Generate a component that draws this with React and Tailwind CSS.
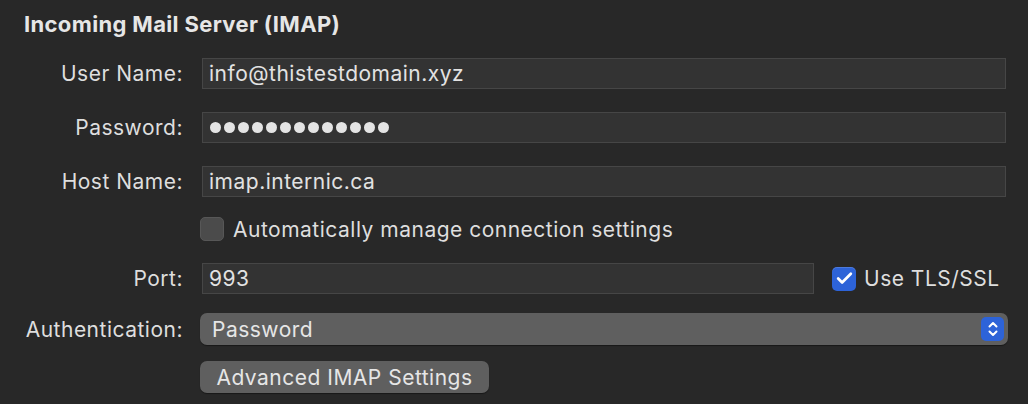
import { Check } from "lucide-react";

const font = { fontFamily: "Inter, 'Liberation Sans', sans-serif" };

function Label({ children }) {
  return (
    <div className="w-[183px] shrink-0 text-right text-[21px] tracking-[0.5px] text-[#dedede] leading-none">
      {children}
    </div>
  );
}

function Field({ value, className = "" }) {
  return (
    <div
      className={`h-[31px] flex items-center px-[6px] bg-[#333333] border border-[#464646] text-[21px] tracking-[0.5px] text-[#e2e2e2] leading-none ${className}`}
    >
      {value}
    </div>
  );
}

function Checkbox({ checked }) {
  return checked ? (
    <div className="w-[24px] h-[24px] rounded-[5px] bg-[#2d63d8] grid place-items-center shadow-[inset_0_1px_0_rgba(255,255,255,0.15)]">
      <Check size={19} strokeWidth={3.4} className="text-white" />
    </div>
  ) : (
    <div className="w-[24px] h-[24px] rounded-[5px] bg-[#4b4b4b] border border-[#575757]" />
  );
}

const dots = Array.from({ length: 13 });

export default function App() {
  return (
    <div className="w-[1028px] h-[404px] bg-[#282828] overflow-hidden" style={font}>
      <div className="pl-[24px] pt-[13px] text-[22px] tracking-[0.35px] font-bold text-[#e6e6e6] leading-[22px] h-[58px]">
        Incoming Mail Server (IMAP)
      </div>

      <div className="flex flex-col">
        <div className="flex items-center">
          <Label>User Name:</Label>
          <Field value="info@thistestdomain.xyz" className="ml-[19px] w-[804px]" />
        </div>
        <div className="flex items-center mt-[23px]">
          <Label>Password:</Label>
          <Field
            value={
              <div className="flex gap-[3px] ml-[1px]">
                {dots.map((_, i) => (
                  <div key={i} className="w-[11px] h-[11px] rounded-full bg-[#e4e4e4]" />
                ))}
              </div>
            }
            className="ml-[19px] w-[804px]"
          />
        </div>
        <div className="flex items-center mt-[23px]">
          <Label>Host Name:</Label>
          <Field value="imap.internic.ca" className="ml-[19px] w-[804px]" />
        </div>

        <div className="flex items-center mt-[20px] ml-[200px] gap-[9px]">
          <Checkbox checked={false} />
          <span className="text-[21px] tracking-[0.5px] text-[#dedede] leading-none">
            Automatically manage connection settings
          </span>
        </div>

        <div className="flex items-center mt-[22px]">
          <Label>Port:</Label>
          <Field value="993" className="ml-[19px] w-[612px]" />
          <div className="ml-[18px] flex items-center gap-[8px]">
            <Checkbox checked />
            <span className="text-[21px] tracking-[0.5px] text-[#dedede] leading-none">Use TLS/SSL</span>
          </div>
        </div>

        <div className="flex items-center mt-[19px]">
          <Label>Authentication:</Label>
          <div className="ml-[17px] w-[808px] h-[32px] rounded-[7px] bg-[#5f5f5f] flex items-center justify-between pl-[12px] pr-[4px] shadow-[0_1px_1px_rgba(0,0,0,0.4)]">
            <span className="text-[21px] tracking-[0.5px] text-[#e6e6e6] leading-none">Password</span>
            <div className="w-[23px] h-[24px] rounded-[5px] bg-[#2d63d8] grid place-items-center">
              <svg width="12" height="18" viewBox="0 0 12 18" fill="none" stroke="white" strokeWidth="2" strokeLinecap="round" strokeLinejoin="round">
                <path d="M2.5 6.5 L6 3 L9.5 6.5" />
                <path d="M2.5 11.5 L6 15 L9.5 11.5" />
              </svg>
            </div>
          </div>
        </div>

        <div className="mt-[16px] ml-[200px]">
          <div className="w-[289px] h-[32px] rounded-[7px] bg-[#5f5f5f] flex items-center justify-center text-[21px] tracking-[0.5px] text-[#e6e6e6] leading-none shadow-[0_1px_1px_rgba(0,0,0,0.4)]">
            Advanced IMAP Settings
          </div>
        </div>
      </div>
    </div>
  );
}
